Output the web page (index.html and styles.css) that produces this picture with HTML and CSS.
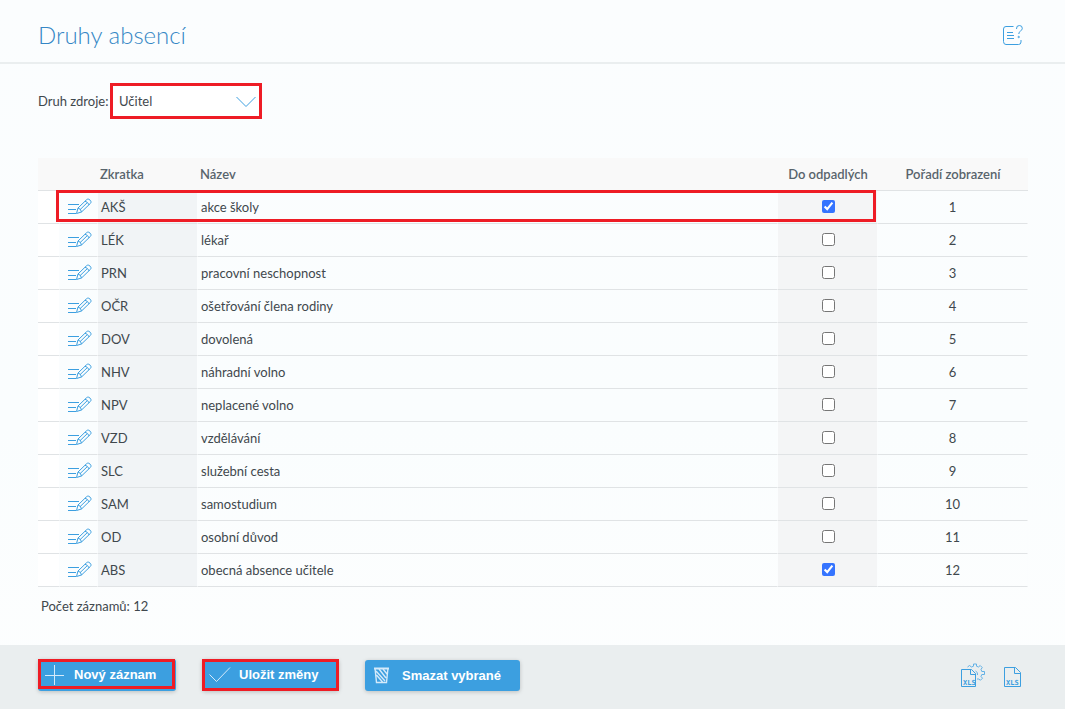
FILE: index.html
```html
<!DOCTYPE html>
<html lang="cs">
<head>
<meta charset="utf-8">
<title>Druhy absencí</title>
<link rel="stylesheet" href="styles.css">
</head>
<body>
<svg class="defs" aria-hidden="true">
  <symbol id="edit" viewBox="0 0 24 18">
    <path d="M0 6.500h11M0 11.500h8M0 15.500h8"/>
    <path d="M8.500 15.500l1.500-5.500L18.500 1.800q1-1 2.200-.6 2 .9 2.300 2.500.1 1-.7 1.800L13.500 14z"/>
    <path d="M10 10q3 .8 3.500 4M17 3.200q3 .7 4 3.700M12 11.700l7-6.800"/>
  </symbol>
</svg>
<header class="top">
  <h1 class="title">Druhy absencí</h1>
  <a class="help" href="#" aria-label="Nápověda">
    <svg width="20" height="21" viewBox="0 0 20 21"><path d="M10.500 1.500H3Q.5 1.500.5 4v12.500Q.5 19.500 3 19.500h12.500q2.500 0 2.500-2.500v-2M4 7.500h6M4 10.500h7M4 13.500h7M13.500 4q-.3-3.500 2.800-3.500 3 0 3 2.800 0 1.700-1.800 2.700-1.700 1-1.700 3"/><circle cx="15.700" cy="12" r=".7"/></svg>
  </a>
</header>
<main class="content">
  <form class="filter">
    <label for="source">Druh zdroje:</label>
    <span class="select-box">
      <select id="source" class="select"><option>Učitel</option></select>
      <svg class="chevron" width="20" height="12" viewBox="0 0 20 12"><path d="M.5 1l9.500 9.500L19.500 1"/></svg>
    </span>
  </form>
  <table class="grid">
    <colgroup><col class="c-space"><col class="c-edit"><col class="c-code"><col><col class="c-check"><col class="c-order"></colgroup>
    <thead>
      <tr><th></th><th></th><th>Zkratka</th><th>Název</th><th class="mid">Do odpadlých</th><th class="mid">Pořadí zobrazení</th></tr>
    </thead>
    <tbody id="rows"></tbody>
  </table>
  <p class="count">Počet záznamů: 12</p>
</main>
<footer class="bar">
  <button type="button" class="btn btn-new"><svg class="i-plus" width="20" height="20" viewBox="0 0 20 20"><path d="M0 10.500h19M9.500 0v20"/></svg><span>Nový záznam</span></button>
  <button type="button" class="btn btn-save"><svg class="i-tick" width="22" height="16" viewBox="0 0 22 16"><path d="M.5 7.500l7 7L21 .5"/></svg><span>Uložit změny</span></button>
  <button type="button" class="btn btn-delete"><svg class="i-bin" width="16" height="17" viewBox="0 0 16 17"><path class="lid" d="M0 1.500h15"/><path class="can" d="M1 1l1.500 14.500h10L14 1M2 4l9 10M5 2l7 9M9 2l4 5M2.500 8l6 7"/></svg><span>Smazat vybrané</span></button>
  <div class="exports">
    <a href="#" aria-label="Nastavení exportu XLS"><svg width="26" height="25" viewBox="0 0 26 25"><path class="gear" d="M6.500 4l2-1.500L10.500 4l2-.8V1h3v2.200l2 .8 1.700-1.500 2 2L20 6.500l.8 2h2.700v3h-2.700l-.8 2 1.500 1.700-2 2-2-1.200h-1.500M14.500 8q2.500 1 2 4"/><path d="M.5 6.500h10l4 4v13H.5zM9.500 6.500v5h5"/><text x="2" y="22">XLS</text></svg></a>
    <a href="#" aria-label="Export XLS"><svg width="18" height="21" viewBox="0 0 18 21"><path d="M.5 .5h11l5 5v14H.5zM10.500 .5v6h6"/><text x="2" y="18">XLS</text></svg></a>
  </div>
</footer>
<script src="rows.js"></script>
</body>
</html>
```

FILE: styles.css
```css
* { box-sizing: border-box; }

body {
  margin: 0;
  min-height: 100vh;
  display: flex;
  flex-direction: column;
  background: linear-gradient(180deg, #fbfdfe, #fafdfe 60%, #fdfefe);
  color: #3f484d;
  font: 13px/20px Lato, "Noto Sans", sans-serif;
}

svg {
  fill: none;
  stroke: #3c9fe0;
}

svg text {
  font: bold 7px "DejaVu Sans Mono", monospace;
  fill: #3c9fe0;
  stroke: none;
}

.defs {
  position: absolute;
  width: 0;
  height: 0;
}

.top {
  display: flex;
  align-items: center;
  justify-content: space-between;
  height: 64px;
  padding: 8px 42px 0 38px;
  border-bottom: 2px solid #eaeeef;
}

.title {
  margin: 0;
  color: #3587c5;
  font-size: 24px;
  font-weight: 300;
  line-height: 32px;
}

.help { display: flex; padding-top: 1px; }

.content {
  flex: 1;
  padding: 19px 37px 20px 38px;
}

.filter {
  display: flex;
  align-items: center;
  margin-bottom: 39px;
}

.filter label { width: 72px; white-space: nowrap; }

.select-box {
  position: relative;
  width: 152px;
}

.select {
  display: block;
  appearance: none;
  width: 100%;
  height: 36px;
  padding: 0 32px 0 6px;
  border: 3px solid #ee1c25;
  border-radius: 0;
  background: #fff;
  color: inherit;
  font: inherit;
}

.chevron {
  position: absolute;
  top: 13px;
  right: 6px;
  pointer-events: none;
}

.grid {
  position: relative;
  width: 100%;
  border-spacing: 0;
  table-layout: fixed;
}

.c-space { width: 22px; }
.c-edit { width: 38px; }
.c-code { width: 100px; }
.c-check { width: 100px; }
.c-order { width: 150px; }

.grid th,
.grid td {
  height: 33px;
  padding: 0 3px;
  border-bottom: 1px solid #e0e3e5;
  text-align: left;
}

.grid th {
  padding: 0 2px 1px;
  background: #f9f9f9;
  color: #58646c;
  font-size: 13px;
  font-weight: 600;
}

.grid td {
  border-right: 1px solid #fbfdfe;
  background-clip: padding-box;
}

.grid td:first-child { background-color: #fff; }
.grid td:nth-child(2) { padding: 0 0 0 8px; }
.grid td:nth-child(3) { background-color: #f1f4f6; }
.grid td:nth-child(5) { padding: 0 2px 2px 3px; background-color: #f4f5f6; }
.grid .mid { text-align: center; }

.edit {
  display: block;
  width: 24px;
  height: 18px;
}

.edit svg { display: block; }

.tick {
  display: block;
  width: 13px;
  height: 13px;
  margin: 0 auto;
  accent-color: #3574ff;
}

.highlight::after {
  content: "";
  position: absolute;
  top: 32px;
  left: 18px;
  right: 152px;
  height: 32px;
  box-sizing: border-box;
  border: 3px solid #ee1c25;
  pointer-events: none;
}

.count { margin: 9px 3px 0; }

.bar {
  display: flex;
  align-items: flex-start;
  height: 64px;
  padding: 14px 43px 0 38px;
  background: #eaeeef;
}

.btn {
  position: relative;
  display: flex;
  align-items: center;
  height: 32px;
  padding: 0;
  border: 0;
  border-radius: 3px;
  background: #3c9fe0;
  box-shadow: 0 1px 4px #0003;
  color: #fff;
  font: bold 13px/20px "Liberation Sans", Arial, sans-serif;
}

.btn svg { stroke: #d5eafa; }
.btn-new { width: 138px; margin-right: 26px; }
.btn-save { width: 137px; margin-right: 26px; }
.btn-delete { width: 155px; height: 31px; margin-top: 1px; }
.i-plus { margin: 0 9px 0 7px; }
.i-tick { margin: 0 8px 0 7px; }
.i-bin { margin: 0 12px 0 9px; }
.lid { stroke-width: 2; }
.can { stroke-width: 1.4; }

.btn-new::after,
.btn-save::after {
  content: "";
  position: absolute;
  inset: 0;
  box-sizing: border-box;
  border: 3px solid #ee1c25;
}

.btn-new::after { inset: 0 1px 2px 0; }

.exports {
  display: flex;
  align-items: flex-end;
  gap: 17px;
  margin-left: auto;
  padding-top: 4px;
}

.exports a { display: flex; }
.gear { stroke: #62b1e6; }
```

FILE: rows.js
```js
const rows = [
  ["AKŠ", "akce školy", true],
  ["LÉK", "lékař", false],
  ["PRN", "pracovní neschopnost", false],
  ["OČR", "ošetřování člena rodiny", false],
  ["DOV", "dovolená", false],
  ["NHV", "náhradní volno", false],
  ["NPV", "neplacené volno", false],
  ["VZD", "vzdělávání", false],
  ["SLC", "služební cesta", false],
  ["SAM", "samostudium", false],
  ["OD", "osobní důvod", false],
  ["ABS", "obecná absence učitele", true]
];

document.getElementById("rows").innerHTML = rows.map(([code, name, on], i) => `
  <tr>
    <td${i === 0 ? ' class="highlight"' : ""}></td>
    <td><a class="edit" href="#" aria-label="Upravit ${code}"><svg width="24" height="18"><use href="#edit"/></svg></a></td>
    <td>${code}</td>
    <td>${name}</td>
    <td><input class="tick" type="checkbox" aria-label="Do odpadlých: ${name}"${on ? " checked" : ""}></td>
    <td class="mid">${i + 1}</td>
  </tr>`).join("");
```
